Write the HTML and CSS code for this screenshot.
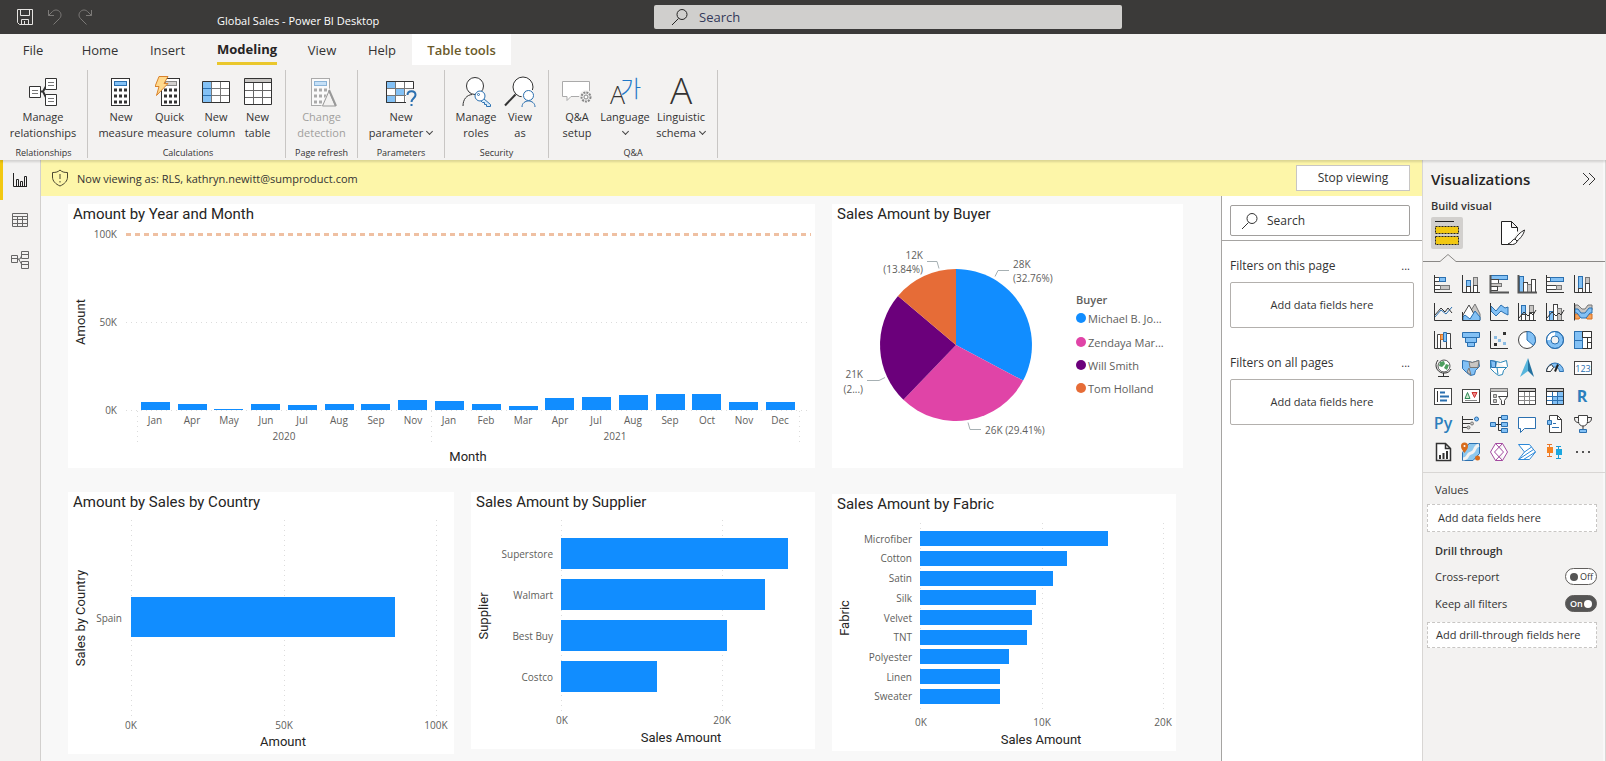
FILE: index.html
```html
<!DOCTYPE html>
<html lang="en">
<head>
<meta charset="utf-8">
<title>Global Sales - Power BI Desktop</title>
<meta name="viewport" content="width=device-width, initial-scale=1">
<link rel="stylesheet" href="styles.css">
</head>
<body>
<header class="titlebar">
  <div class="quick">
    <button aria-label="Save"><svg width="18" height="18" viewBox="0 0 18 18"><path d="M1.500 1.500h15v15h-13l-2-2zM4.500 1.500v6h9v-6M5.500 16.500v-5h7v5M8.500 13v3.500" stroke="#e6e4e2" fill="none"/></svg></button>
    <button aria-label="Undo"><svg width="18" height="18" viewBox="0 0 18 18"><path d="M2.500 2v5.500h5.500M2.500 7.500l4-4c2-2 5-2 7 0s2 5 0 7l-6 6" stroke="#7b7977" fill="none"/></svg></button>
    <button aria-label="Redo"><svg width="18" height="18" viewBox="0 0 18 18"><path d="M15.500 2v5.500h-5.500M15.500 7.500l-4-4c-2-2-5-2-7 0s-2 5 0 7l6 6" stroke="#7b7977" fill="none"/></svg></button>
  </div>
  <h1>Global Sales - Power BI Desktop</h1>
  <label class="topsearch">
    <svg width="18" height="18" viewBox="0 0 18 18"><circle cx="11" cy="6.500" r="5" fill="none" stroke="#252423"/><path d="M7.500 10.500L1 17" stroke="#252423"/></svg>
    <input type="text" placeholder="Search" aria-label="Search">
  </label>
</header>

<nav class="tabs">
  <button class="t-file">File</button><button class="t-home">Home</button><button class="t-insert">Insert</button><button class="t-modeling on"><span>Modeling</span></button><button class="t-view">View</button><button class="t-help">Help</button><button class="t-table">Table tools</button>
</nav>

<section class="ribbon" aria-label="Modeling">
  <div class="group g-rel">
    <div class="items">
      <button class="w86"><svg width="30" height="30" viewBox="0 0 30 30"><path d="M12 15.500h3l4-7M15 15.500l4 8" stroke="#333" stroke-width="2" fill="none"/><g fill="#fff" stroke="#333"><path d="M1.500 10.500h11v11h-11zM17.500 2.500h11v11h-11zM17.500 18.500h11v11h-11z"/></g><path d="M4 14.500h6M4 17.500h6M20 6.500h6M20 9.500h6M20 22.500h6M20 25.500h6" stroke="#777"/></svg><span>Manage<br>relationships</span></button>
    </div>
    <div class="caption">Relationships</div>
  </div>
  <div class="group g-calc">
    <div class="items">
      <button class="w48"><svg width="30" height="30" viewBox="0 0 30 30"><rect x="5.500" y="2.500" width="18" height="27" fill="#fff" stroke="#333"/><rect x="8.500" y="5.500" width="12" height="4" fill="#83c1f5" stroke="#2b70b0"/><path d="M8 14h14M8 20h14M8 26h14" stroke="#333" stroke-width="3" stroke-dasharray="3 2"/></svg><span>New<br>measure</span></button>
      <button class="w49"><svg width="30" height="30" viewBox="0 0 30 30"><rect x="6.500" y="2.500" width="18" height="27" fill="#fff" stroke="#333"/><rect x="10.500" y="5.500" width="11" height="4" fill="#d2d0ce" stroke="#888"/><path d="M9 14h14M9 20h14M9 26h14" stroke="#333" stroke-width="3" stroke-dasharray="3 2"/><path d="M4 .5h9l-4 7h4L1.500 19.500l2.500-9H0z" fill="#ffd98c" stroke="#d9822b"/></svg><span>Quick<br>measure</span></button>
      <button class="w44"><svg width="30" height="30" viewBox="0 0 30 30"><path d="M1.500 5.500h27v21h-27z" fill="#fff"/><path d="M1.500 5.500h9v21h-9z" fill="#83c1f5"/><path d="M10.500 5.500v21M19.500 5.500v21M10.500 12.500h18M10.500 19.500h18" stroke="#777" fill="none"/><path d="M1.500 12.500h9M1.500 19.500h9" stroke="#2b70b0"/><path d="M1.500 5.500h27v21h-27z" stroke="#333" fill="none"/></svg><span>New<br>column</span></button>
      <button class="w39"><svg width="30" height="30" viewBox="0 0 30 30"><path d="M1.500 2.500h27v26h-27z" fill="#fff"/><path d="M1.500 2.500h27v4h-27z" fill="#c8c6c4"/><path d="M10.500 6.500v22M19.500 6.500v22M1.500 14.500h27M1.500 21.500h27" stroke="#666"/><path d="M1.500 2.500h27v26h-27zM1.500 6.500h27" stroke="#333" fill="none"/></svg><span>New<br>table</span></button>
    </div>
    <div class="caption">Calculations</div>
  </div>
  <div class="group g-page">
    <div class="items">
      <button class="w71" disabled><svg width="30" height="32" viewBox="0 0 30 32"><rect x="4.500" y="3.500" width="18" height="27" fill="#fafafa" stroke="#aaa"/><rect x="7.500" y="6.500" width="12" height="4" fill="#c5e0f7" stroke="#8ab4d8"/><path d="M7 15h14M7 21h14M7 27h14" stroke="#aaa" stroke-width="3" stroke-dasharray="3 2"/><path d="M22.500 13L30 31.500H14z" fill="#f3f2f1"/><path d="M22 16l-6.500 15h13z" fill="#f3f2f1" stroke="#999"/><path d="M22 15l7 16" stroke="#999" stroke-width="2"/></svg><span>Change<br>detection</span></button>
    </div>
    <div class="caption">Page refresh</div>
  </div>
  <div class="group g-param">
    <div class="items">
      <button class="w86"><svg width="32" height="30" viewBox="0 0 32 30"><path d="M1.500 5.500h27v21h-27z" fill="#fff"/><path d="M1.500 5.500h9v7h-9zM1.500 19.500h9v7h-9zM10.500 12.500h9v7h-9z" fill="#83c1f5" stroke="#2b70b0"/><path d="M10.500 5.500v21M19.500 5.500v21M1.500 12.500h27M1.500 19.500h27" stroke="#777"/><path d="M1.500 5.500h27v21h-27z" stroke="#333" fill="none"/><path d="M21 13h11v18H21z" fill="#f3f2f1"/><path d="M22.500 19c0-5 8-5 8 0 0 3-4 3.500-4 7M26.500 28v2" stroke="#2b70b0" stroke-width="2" fill="none"/></svg><span>New<br>parameter <i class="chev"></i></span></button>
    </div>
    <div class="caption">Parameters</div>
  </div>
  <div class="group g-sec">
    <div class="items">
      <button class="w50"><svg width="32" height="32" viewBox="0 0 32 32"><circle cx="15" cy="11" r="8.500" fill="#fff" stroke="#333"/><path d="M3 31c0-7 4-11 9-11.500" fill="none" stroke="#333"/><path d="M23.500 23.500l7 6v2h-4v-2h-2v-2h-2l-2.500-2.500z" fill="#d7ebfb" stroke="#2b70b0"/><circle cx="20" cy="21" r="5" fill="#fff" stroke="#2b70b0"/><circle cx="18.500" cy="19.500" r="1" fill="none" stroke="#2b70b0"/></svg><span>Manage<br>roles</span></button>
      <button class="w38"><svg width="34" height="32" viewBox="0 0 34 32"><circle cx="20" cy="12" r="10" fill="#fff" stroke="#333"/><path d="M12.500 19.500L2 30.500" stroke="#333" stroke-width="2"/><path d="M18 32v-9l4-8h9v17z" fill="#f3f2f1"/><circle cx="25.500" cy="20.500" r="5" fill="#fff" stroke="#2b70b0"/><path d="M19 32c0-8 13-8 13 0" fill="none" stroke="#2b70b0"/></svg><span>View<br>as</span></button>
    </div>
    <div class="caption">Security</div>
  </div>
  <div class="group g-qa">
    <div class="items">
      <button class="w44"><svg width="32" height="30" viewBox="0 0 32 30"><path d="M1.500 5.500h27v15H10l-4 4v-4H1.500z" fill="#fff" stroke="#aaa"/><circle cx="25" cy="21" r="7" fill="#f3f2f1"/><circle cx="25" cy="21" r="4.500" fill="#eee" stroke="#888" stroke-width="2" stroke-dasharray="2 1"/><circle cx="25" cy="21" r="2" fill="#fff" stroke="#888"/></svg><span>Q&amp;A<br>setup</span></button>
      <button class="w52"><svg width="32" height="32" viewBox="0 0 32 32"><text x="1" y="29" font-size="25" fill="#333" class="la">A</text><text x="11" y="22" font-size="23" fill="#1f78c8" class="kr">가</text></svg><span>Language<br><i class="chev"></i></span></button>
      <button class="w60"><svg width="32" height="32" viewBox="0 0 32 32"><text x="16" y="29" font-size="37" text-anchor="middle" fill="#333" class="la">A</text></svg><span>Linguistic<br>schema <i class="chev"></i></span></button>
    </div>
    <div class="caption">Q&amp;A</div>
  </div>
</section>

<div class="work">
  <nav class="rail">
    <button class="sel" aria-label="Report view"><svg width="16" height="16" viewBox="0 0 16 16"><path d="M1.500 1v13.500H15M4.500 14V7.500h2V14M8.500 14v-4.500h2V14M12.500 14V4.500h2V14" fill="none" stroke="#222"/></svg></button>
    <button aria-label="Data view"><svg width="18" height="18" viewBox="0 0 18 18"><path d="M1.500 2.500h15v13h-15zM1.500 5.500h15M1.500 8.500h15M1.500 12.500h15M6.500 5v10.500M11.500 5v10.500" fill="none" stroke="#666"/></svg></button>
    <button aria-label="Model view"><svg width="20" height="20" viewBox="0 0 20 20"><path d="M1.500 5.500h6v7h-6zM11.500 1.500h7v7h-7zM11.500 11.500h7v7h-7zM7.500 9h2.500l1.500-3M8.500 9l3 5M11.500 4.500h7M11.500 14.500h7M1.500 8.500h6" fill="none" stroke="#666"/></svg></button>
  </nav>

  <main class="center">
    <div class="notice">
      <svg width="18" height="18" viewBox="0 0 18 18"><path d="M9 1c2 2 4 2.500 7.500 2.500V8c0 4-3 7-7.500 9-4.500-2-7.500-5-7.500-9V3.500C5 3.500 7 3 9 1zM9 5v5M9 12v1.500" fill="none" stroke="#4a4630"/></svg>
      <p>Now viewing as: RLS, kathryn.newitt@sumproduct.com</p>
      <button>Stop viewing</button>
    </div>
    <div class="split">
      <div class="canvas">
        <div class="col-left">
          <article class="card">
            <h2>Amount by Year and Month</h2>
            <svg class="chart" viewBox="0 0 747 240">
              <path class="grid" d="M58 94.500h684M58 182.500h684M69.500 183v35M363.500 183v35M731.500 183v35"/>
              <path d="M58 6.500h685" stroke="#efc0a2" stroke-width="3" stroke-dasharray="5 4"/>
              <g class="bar"><rect x="73" y="174" width="29" height="8"/><rect x="110" y="176" width="29" height="6"/><rect x="146" y="181" width="29" height="1"/><rect x="183" y="176" width="29" height="6"/><rect x="220" y="177" width="29" height="5"/><rect x="257" y="176" width="29" height="6"/><rect x="293" y="176" width="29" height="6"/><rect x="330" y="172" width="29" height="10"/><rect x="367" y="173" width="29" height="9"/><rect x="404" y="176" width="29" height="6"/><rect x="441" y="178" width="29" height="4"/><rect x="477" y="170" width="29" height="12"/><rect x="514" y="169" width="29" height="13"/><rect x="551" y="167" width="29" height="15"/><rect x="588" y="166" width="29" height="16"/><rect x="624" y="166" width="29" height="16"/><rect x="661" y="174" width="29" height="8"/><rect x="698" y="174" width="29" height="8"/></g>
              <g class="lab end"><text x="49" y="10">100K</text><text x="49" y="98">50K</text><text x="49" y="186">0K</text></g>
              <g class="lab mid"><text x="87" y="196">Jan</text><text x="124" y="196">Apr</text><text x="161" y="196">May</text><text x="198" y="196">Jun</text><text x="234" y="196">Jul</text><text x="271" y="196">Aug</text><text x="308" y="196">Sep</text><text x="345" y="196">Nov</text><text x="381" y="196">Jan</text><text x="418" y="196">Feb</text><text x="455" y="196">Mar</text><text x="492" y="196">Apr</text><text x="528" y="196">Jul</text><text x="565" y="196">Aug</text><text x="602" y="196">Sep</text><text x="639" y="196">Oct</text><text x="676" y="196">Nov</text><text x="712" y="196">Dec</text><text x="216" y="212">2020</text><text x="547" y="212">2021</text></g>
              <text class="axis" x="400" y="233">Month</text>
              <text class="axis" transform="translate(17 94) rotate(-90)">Amount</text>
            </svg>
          </article>
          <div class="pair">
            <article class="card c-country">
              <h2>Amount by Sales by Country</h2>
              <svg class="chart" viewBox="0 0 386 238">
                <path class="grid" d="M63.500 4v196M216.500 4v196M368.500 4v196"/>
                <g class="bar"><rect x="63" y="81" width="264" height="40"/></g>
                <g class="lab end"><text x="54" y="106">Spain</text></g>
                <g class="lab mid"><text x="63" y="213">0K</text><text x="216" y="213">50K</text><text x="368" y="213">100K</text></g>
                <text class="axis" x="215" y="230">Amount</text>
                <text class="axis" transform="translate(17 102) rotate(-90)">Sales by Country</text>
              </svg>
            </article>
            <article class="card c-supplier">
              <h2>Sales Amount by Supplier</h2>
              <svg class="chart" viewBox="0 0 344 233">
                <path class="grid" d="M90.500 4v191M251.500 4v191"/>
                <g class="bar"><rect x="90" y="22" width="227" height="31"/><rect x="90" y="63" width="204" height="31"/><rect x="90" y="104" width="166" height="31"/><rect x="90" y="145" width="96" height="31"/></g>
                <g class="lab end"><text x="82" y="42">Superstore</text><text x="82" y="83">Walmart</text><text x="82" y="124">Best Buy</text><text x="82" y="165">Costco</text></g>
                <g class="lab mid"><text x="91" y="208">0K</text><text x="251" y="208">20K</text></g>
                <text class="axis" x="210" y="226">Sales Amount</text>
                <text class="axis" transform="translate(17 100) rotate(-90)">Supplier</text>
              </svg>
            </article>
          </div>
        </div>
        <div class="col-right">
          <article class="card">
            <h2>Sales Amount by Buyer</h2>
            <svg class="chart" viewBox="0 0 351 240">
              <path fill="#118dff" d="M124 117V41A76 76 0 0 1 191.100 152.600z"/>
              <path fill="#e044a7" d="M124 117L191.100 152.600A76 76 0 0 1 71.400 171.800z"/>
              <path fill="#6b007b" d="M124 117L71.400 171.800A76 76 0 0 1 66 67.900z"/>
              <path fill="#e66c37" d="M124 117L66 67.900A76 76 0 0 1 124 41z"/>
              <path d="M95 33.500h10l2 7M177 42.500h-11l-3 6M35 152.500h12l6-3M149 201.500h-11l-2-7" fill="none" stroke="#a6b0b3"/>
              <g class="lab end"><text x="91" y="31">12K</text><text x="91" y="45">(13.84%)</text><text x="31" y="150">21K</text><text x="31" y="165">(2...)</text></g>
              <g class="lab"><text x="181" y="40">28K</text><text x="181" y="54">(32.76%)</text><text x="153" y="206">26K (29.41%)</text></g>
              <circle cx="249" cy="90" r="5" fill="#118dff"/><circle cx="249" cy="114" r="5" fill="#e044a7"/><circle cx="249" cy="137" r="5" fill="#6b007b"/><circle cx="249" cy="160" r="5" fill="#e66c37"/>
              <g class="legend"><text class="strong" x="244" y="76">Buyer</text><text x="256" y="95">Michael B. Jo...</text><text x="256" y="119">Zendaya Mar...</text><text x="256" y="142">Will Smith</text><text x="256" y="165">Tom Holland</text></g>
            </svg>
          </article>
          <article class="card c-fabric">
            <h2>Sales Amount by Fabric</h2>
            <svg class="chart" viewBox="0 0 344 233">
              <path class="grid" d="M88.500 5v190M210.500 5v190M331.500 5v190"/>
              <g class="bar"><rect x="88" y="13" width="188" height="15"/><rect x="88" y="33" width="147" height="15"/><rect x="88" y="53" width="133" height="15"/><rect x="88" y="72" width="116" height="15"/><rect x="88" y="92" width="112" height="15"/><rect x="88" y="112" width="107" height="15"/><rect x="88" y="131" width="89" height="15"/><rect x="88" y="151" width="80" height="15"/><rect x="88" y="171" width="80" height="15"/></g>
              <g class="lab end"><text x="80" y="25">Microfiber</text><text x="80" y="44">Cotton</text><text x="80" y="64">Satin</text><text x="80" y="84">Silk</text><text x="80" y="104">Velvet</text><text x="80" y="123">TNT</text><text x="80" y="143">Polyester</text><text x="80" y="163">Linen</text><text x="80" y="182">Sweater</text></g>
              <g class="lab mid"><text x="89" y="208">0K</text><text x="210" y="208">10K</text><text x="331" y="208">20K</text></g>
              <text class="axis" x="209" y="226">Sales Amount</text>
              <text class="axis" transform="translate(17 100) rotate(-90)">Fabric</text>
            </svg>
          </article>
        </div>
      </div>

      <aside class="filters">
        <div class="fsearch">
          <label><svg width="18" height="18" viewBox="0 0 18 18"><circle cx="11" cy="6.500" r="5" fill="none" stroke="#333"/><path d="M7.500 10.500L1 17" stroke="#333"/></svg><input type="text" placeholder="Search" aria-label="Search filters"></label>
        </div>
        <section><header><h3>Filters on this page</h3><button aria-label="More options for page filters">...</button></header><div class="drop">Add data fields here</div></section>
        <section><header><h3>Filters on all pages</h3><button aria-label="More options for all page filters">...</button></header><div class="drop">Add data fields here</div></section>
      </aside>
    </div>
  </main>

  <aside class="viz">
    <header><h2>Visualizations</h2><button aria-label="Collapse pane"><svg width="14" height="14" viewBox="0 0 14 14"><path d="M1 1l6 6-6 6M7 1l6 6-6 6" fill="none" stroke="#333"/></svg></button></header>
    <h3>Build visual</h3>
    <div class="modes">
      <button class="sel" aria-label="Build visual"><svg width="32" height="32" viewBox="0 0 32 32"><path d="M4 4.500h19" stroke="#222"/><path d="M4.500 9.500h23v7h-23zM4.500 19.500h23v8h-23z" fill="#f2c811" stroke="#222" stroke-dasharray="2 1"/></svg></button>
      <button aria-label="Format visual"><svg width="32" height="32" viewBox="0 0 32 32"><path d="M14 27.500H5.500v-23h10l6 6v4M15.500 4.500v6h6" fill="#fff" stroke="#222"/><path d="M28.500 13c-4 2-8 6-9.500 9l2 2c3-2 7-7 7.500-11zM19 22c-3 0-3 4-7 5 4 1.500 9 0 9-3z" fill="#fff" stroke="#222"/></svg></button>
    </div>
    <svg class="notch" width="100%" height="8" aria-hidden="true"><path d="M0 7.500h17l8-7 8 7H2000" fill="none" stroke="#8a8886"/></svg>
    <div class="icons">
      <button aria-label="Stacked bar chart"><svg viewBox="0 0 20 20"><rect class="w" x="1.500" y="3.500" width="5" height="4"/><rect class="b" x="6.500" y="3.500" width="6" height="4"/><rect class="w" x="1.500" y="11.500" width="6" height="4"/><rect class="g" x="7.500" y="11.500" width="9" height="4"/><path class="k" d="M1.500 1v17.500H19"/></svg></button>
      <button aria-label="Stacked column chart"><svg viewBox="0 0 20 20"><rect class="b" x="5.500" y="6.500" width="4" height="6"/><rect class="w" x="5.500" y="12.500" width="4" height="6"/><rect class="g" x="12.500" y="3.500" width="4" height="8"/><rect class="w" x="12.500" y="11.500" width="4" height="7"/><path class="k" d="M1.500 1v17.500H19"/></svg></button>
      <button aria-label="Clustered bar chart"><svg viewBox="0 0 20 20"><rect class="b" x="1.500" y="1.500" width="17" height="4"/><rect class="w" x="1.500" y="5.500" width="8" height="4"/><rect class="g" x="1.500" y="9.500" width="11" height="3"/><rect class="w" x="1.500" y="12.500" width="7" height="4"/><path class="k2" d="M1.500 1v17.500H20"/></svg></button>
      <button aria-label="Clustered column chart"><svg viewBox="0 0 20 20"><rect class="b" x="2.500" y="2.500" width="4" height="16"/><rect class="w" x="6.500" y="8.500" width="4" height="10"/><rect class="g" x="10.500" y="10.500" width="4" height="8"/><rect class="w" x="14.500" y="5.500" width="4" height="13"/><path class="k2" d="M1.500 1v17.500H20"/></svg></button>
      <button aria-label="100% stacked bar chart"><svg viewBox="0 0 20 20"><rect class="w" x="1.500" y="3.500" width="4" height="4"/><rect class="b" x="5.500" y="3.500" width="13" height="4"/><rect class="w" x="1.500" y="11.500" width="10" height="4"/><rect class="g" x="11.500" y="11.500" width="5" height="4"/><path class="k" d="M1.500 1v17.500H19"/></svg></button>
      <button aria-label="100% stacked column chart"><svg viewBox="0 0 20 20"><rect class="b" x="5.500" y="2.500" width="4" height="12"/><rect class="w" x="5.500" y="14.500" width="4" height="4"/><rect class="g" x="12.500" y="3.500" width="4" height="6"/><rect class="w" x="12.500" y="9.500" width="4" height="9"/><path class="k" d="M1.500 1v17.500H19"/></svg></button>

      <button aria-label="Line chart"><svg viewBox="0 0 20 20"><path class="bl" d="M2 15l6-7 5 4 6-7"/><path class="k" d="M2 13l6-7 4 4 3-4 4 5M1.500 1v17.500H19"/></svg></button>
      <button aria-label="Area chart"><svg viewBox="0 0 20 20"><path class="g" d="M9 10l5-8 5 10v6z"/><path class="w" d="M2 13l6-10 5 9-4 6H2z"/><path class="b" d="M2 18.500V15l2-2 5 4 5-8 5 6v3.500z"/><path class="k" d="M1.500 10v8.500H19"/></svg></button>
      <button aria-label="Stacked area chart"><svg viewBox="0 0 20 20"><path class="b" d="M2 4l5 5 5-6 4 3 3-1v8l-4-2-3-2-5 5-5-5z"/><path class="k" d="M1.500 1v17.500H19"/></svg></button>
      <button aria-label="Line and stacked column chart"><svg viewBox="0 0 20 20"><rect class="b" x="4.500" y="3.500" width="4" height="9"/><rect class="w" x="4.500" y="12.500" width="4" height="6"/><rect class="g" x="12.500" y="3.500" width="4" height="7"/><rect class="w" x="12.500" y="10.500" width="4" height="8"/><path class="k" d="M2 16l5-6 4 4 3-3 2 2 3-5M1.500 1v17.500H19"/></svg></button>
      <button aria-label="Line and clustered column chart"><svg viewBox="0 0 20 20"><rect class="b" x="4.500" y="9.500" width="4" height="9"/><rect class="w" x="8.500" y="2.500" width="4" height="16"/><rect class="g" x="12.500" y="6.500" width="4" height="12"/><path class="k" d="M2 16l5-6 4 4 3-3 2 2 3-5M1.500 1v17.500H19"/></svg></button>
      <button aria-label="Ribbon chart"><svg viewBox="0 0 20 20"><path d="M2 17h4l2-3h4l2 3h5v-5H2z" fill="#f5a25d" stroke="#d9701e"/><path class="g" d="M2 3h3l4 4h3l3-4h4v5h-3l-3 4H8L5 9H2z"/><path class="b" d="M2 7h3l3 4h4l4-5h3v5h-2l-4 5H8l-4-5H2z"/><path class="k" d="M1.500 1v17.500"/></svg></button>

      <button aria-label="Waterfall chart"><svg viewBox="0 0 20 20"><path class="w" d="M4.500 4.500h3v14h-3zM13.500 3.500h4v15h-4z"/><path d="M7.500 4.500h3v5h-3z" fill="#f5a25d" stroke="#d9701e"/><path class="b" d="M10.500 2.500h3v9h-3z"/><path class="k" d="M1.500 1v17.500H19"/></svg></button>
      <button aria-label="Funnel"><svg viewBox="0 0 20 20"><path class="b" d="M1.500 2.500h17v5h-17zM4.500 7.500h11v5h-11zM6.500 12.500h7v4h-7z"/></svg></button>
      <button aria-label="Scatter chart"><svg viewBox="0 0 20 20"><path d="M14 2h3v3h-3zM5 13h3v3H5z" fill="#333"/><path d="M5 6h3v3H5zM9 9h3v3H9zM14 12h3v3h-3z" fill="#8bbbe2"/><path class="k" d="M1.500 1v17.500H19"/></svg></button>
      <button aria-label="Pie chart"><svg viewBox="0 0 20 20"><circle class="w" cx="10" cy="10" r="8.500"/><path class="b" d="M10 10V1.500a8.500 8.500 0 0 1 6.500 14z"/></svg></button>
      <button aria-label="Donut chart"><svg viewBox="0 0 20 20"><circle class="b" cx="10" cy="10" r="8.500"/><path d="M10 2A8 8 0 0 0 2 10h5l3-3z" fill="#fff"/><circle class="bl" cx="10" cy="10" r="8.500"/><circle cx="10" cy="10" r="4" fill="#f3f2f1" stroke="#2b70b0"/></svg></button>
      <button aria-label="Treemap"><svg viewBox="0 0 20 20"><path class="w" d="M1.500 1.500h17v17h-17z"/><path class="b" d="M1.500 1.500h8v9h-8zM1.500 10.500h8v8h-8z"/><path class="k" d="M9.500 1.500h9v6h-9zM9.500 7.500h5v11M14.500 12.500h4v6h-9"/></svg></button>

      <button aria-label="Map"><svg viewBox="0 0 20 20"><circle cx="11" cy="8" r="6" fill="#fff" stroke="#555"/><path d="M7 4l4-1 1 3-3 3-3-1zM13 6l3 1-2 5-3-2z" fill="#4d9e5f"/><path class="k" d="M5 2c-5 6 0 14 7 13 3 0 5-2 6-4M10.500 15v3M5 18.500h11"/></svg></button>
      <button aria-label="Filled map"><svg viewBox="0 0 20 20"><path class="b" d="M1.500 2.500l6 1 4 1 6-2 1 6-4 4-1 4-4 1-4-3-4-4z"/><path class="g" d="M8 3.500l3 1 7-2-1 7H9zM8 10l2 7-4-3z"/></svg></button>
      <button aria-label="Shape map"><svg viewBox="0 0 20 20"><path d="M1.500 2.500l6 1 4 1 6-2 1 6-4 4-1 4-4 1-4-3-4-4zM7.500 3.500l-1 6h11M8 9.500l1 7" fill="#fff" stroke="#2b88b8"/><path class="b" d="M1.500 2.500l5 1v6h-4z"/></svg></button>
      <button aria-label="Azure map"><svg viewBox="0 0 20 20"><path d="M11 0L3 19l8-6z" fill="#57b5dc"/><path d="M11 0l6 19-6-6z" fill="#23719f"/></svg></button>
      <button aria-label="Gauge"><svg viewBox="0 0 20 20"><path class="b" d="M1.500 13.500a8.500 8.500 0 0 1 17 0h-4a4.500 4.500 0 0 0-9 0z"/><path d="M1.500 13.500a8.500 8.500 0 0 1 5-7l2 3-3 4z" fill="#fff" stroke="#333"/><path d="M10 13.500l3-7" stroke="#222" stroke-width="2"/></svg></button>
      <button aria-label="Card"><svg viewBox="0 0 20 20"><rect class="w" x="1.500" y="3.500" width="17" height="13"/><text x="10" y="14" font-size="9" text-anchor="middle" fill="#2b70b0">123</text></svg></button>

      <button aria-label="Multi-row card"><svg viewBox="0 0 20 20"><rect class="w" x="1.500" y="2.500" width="17" height="16"/><path class="k" d="M4.500 5v11"/><path d="M7 6.500h5M7 10.500h9M7 14.500h7" stroke="#2b70b0" stroke-width="2"/></svg></button>
      <button aria-label="KPI"><svg viewBox="0 0 20 20"><rect class="w" x="1.500" y="3.500" width="17" height="13"/><path d="M4 12.500l2.500-6 2.500 6z" fill="#cfe8cf" stroke="#2e8b57"/><path d="M11 6.500h5l-2.500 5z" fill="#e88" stroke="#c33"/><path d="M4 14.500h12" stroke="#888"/></svg></button>
      <button aria-label="Slicer"><svg viewBox="0 0 20 20"><path class="w" d="M1.500 2.500h17v16h-17z"/><path class="g" d="M1.500 2.500h17v3h-17zM4.500 8.500h3v3h-3zM4.500 13.500h3v3h-3z"/><path d="M10 11h9v8h-9z" fill="#f3f2f1"/><path class="w" d="M9.500 10.500h9l-3 4v4h-3v-4z"/></svg></button>
      <button aria-label="Table"><svg viewBox="0 0 20 20"><path class="w" d="M1.500 2.500h17v16h-17z"/><path d="M7.500 6v12M12.500 6v12M2 10.500h16M2 14.500h16" stroke="#888"/><path d="M1.500 2.500h17v3h-17z" fill="#c8c6c4" stroke="#333"/></svg></button>
      <button aria-label="Matrix"><svg viewBox="0 0 20 20"><path class="w" d="M1.500 2.500h17v16h-17z"/><path d="M7 10h6v4H7zM13 6h5v12h-5zM7 14h6v4H7z" fill="#83c1f5"/><path d="M7.500 6v12M12.500 6v12M2 10.500h16M2 14.500h16" stroke="#2b70b0"/><path d="M1.500 2.500h17v3h-17z" fill="#c8c6c4" stroke="#333"/><path class="k" d="M1.500 2.500h17v16h-17z"/></svg></button>
      <button aria-label="R script visual"><svg viewBox="0 0 20 20"><text x="9" y="16" font-size="16" font-weight="700" text-anchor="middle" fill="#2b7fbd">R</text></svg></button>

      <button aria-label="Python visual"><svg viewBox="0 0 20 20"><text x="10" y="15" font-size="16" font-weight="600" text-anchor="middle" fill="#2b7fbd">Py</text></svg></button>
      <button aria-label="Key influencers"><svg viewBox="0 0 20 20"><path class="k" d="M1.500 2v16.500H19M2 5.500h10M2 9.500h7M2 13.500h4" /><circle class="b" cx="15.500" cy="5" r="2"/><circle class="g" cx="11" cy="9.500" r="1.500"/><circle class="g" cx="7.500" cy="13.500" r="1.500"/></svg></button>
      <button aria-label="Decomposition tree"><svg viewBox="0 0 20 20"><path class="k" d="M6 10.500h7M9.500 3.500v13M9.500 3.500h3M9.500 16.500h3"/><path class="b" d="M1.500 8.500h5v4h-5zM12.500 1.500h6v4h-6zM12.500 8.500h6v4h-6zM12.500 14.500h6v4h-6z"/></svg></button>
      <button aria-label="Q&amp;A"><svg viewBox="0 0 20 20"><path d="M1.500 3.500h17v11h-11l-4 4v-4h-2z" fill="#fff" stroke="#2b70b0"/></svg></button>
      <button aria-label="Smart narrative"><svg viewBox="0 0 20 20"><path class="w" d="M4.500 1.500h8l4 4v13h-12z"/><path class="k" d="M12.500 1.500v4h4"/><path class="b" d="M2.500 6.500h4v4h-4z"/><path d="M8 9.500h3M7 13.500h7" stroke="#2b70b0"/></svg></button>
      <button aria-label="Metrics"><svg viewBox="0 0 20 20"><path class="w" d="M5.500 1.500h9v6c0 6-9 6-9 0z"/><path class="k" d="M5 3.500H1.500c0 4 1.500 5 4.500 5M15 3.500h3.500c0 4-1.500 5-4.500 5M10 12v4"/><path class="b" d="M6.500 15.500h7v3h-7z"/></svg></button>

      <button aria-label="Paginated report"><svg viewBox="0 0 20 20"><path d="M3.500 1.500h9l5 5v12h-14zM12.500 1.500v5h5" fill="#fff" stroke="#333" stroke-width="1.500"/><path d="M7 17v-4M10.500 17v-6M14 17V9" stroke="#333" stroke-width="2"/></svg></button>
      <button aria-label="ArcGIS map"><svg viewBox="0 0 20 20"><path d="M8 1.500h10.500v10L12 18.500H1.500v-8z" fill="#8ec8ee" stroke="#2b70b0"/><path d="M2 17c6 0 3-5 8-6s2-6 8-8" fill="none" stroke="#f3f2f1" stroke-width="3"/><path d="M0 4a3 3 0 0 1 7 0c0 3-1.500 4-3.500 7C1.500 8 0 7 0 4z" fill="#d86b1b"/><circle cx="3.500" cy="4" r="1" fill="#fff"/><circle cx="16.500" cy="16" r="2.500" fill="#d86b1b"/></svg></button>
      <button aria-label="Power Apps"><svg viewBox="0 0 20 20"><path d="M6.500 1.500h7l5 8.500-5 8.500h-7L1.500 10zM6.500 1.500l8 8.500-8 8.500M13.500 1.500l-8 8.500 8 8.500" fill="#fff" stroke="#a34aa0" stroke-linejoin="round"/></svg></button>
      <button aria-label="Power Automate"><svg viewBox="0 0 20 20"><path d="M1.500 2.500h11l6 7.500-6 7.500h-11l6-7.500zM7.500 10l7-5M1.500 17.500l15-10M6.500 17.500l12-7.500" fill="#fff" stroke="#2b88d8" stroke-linejoin="round"/></svg></button>
      <button aria-label="Box plot"><svg viewBox="0 0 20 20"><path d="M4.500 2v12M2 2.500h5M2 14.500h5" stroke="#e8762d"/><path d="M2 5h6v6H2z" fill="#f58220"/><path d="M13.500 4v12M11 4.500h5M11 16.500h5" stroke="#1a9ad6"/><path d="M11 7h6v6h-6z" fill="#1aa7e0"/></svg></button>
      <button aria-label="Get more visuals"><svg viewBox="0 0 20 20"><path d="M3 9h2v2H3zM9 9h2v2H9zM15 9h2v2h-2z" fill="#555"/></svg></button>
    </div>
    <div class="fields">
      <h4>Values</h4>
      <div class="well">Add data fields here</div>
      <h4 class="strong">Drill through</h4>
      <div class="row"><label for="cross">Cross-report</label><span class="switch"><input id="cross" type="checkbox"><span>Off</span></span></div>
      <div class="row"><label for="keep">Keep all filters</label><span class="switch"><input id="keep" type="checkbox" checked><span>On</span></span></div>
      <div class="well drill">Add drill-through fields here</div>
    </div>
  </aside>
</div>
</body>
</html>
```

FILE: styles.css
```css
* { box-sizing: border-box; }
body {
  margin: 0;
  height: 100vh;
  display: flex;
  flex-direction: column;
  overflow: hidden;
  background: #f3f2f1;
  color: #333;
  font: 11px/16px "Open Sans", "Noto Sans", sans-serif;
}
h1, h2, h3, h4, p { margin: 0; font-weight: 400; font-size: inherit; }
button, input { font: inherit; color: inherit; }
button { border: 0; padding: 0; background: none; }
svg { display: block; flex: none; }

.titlebar {
  display: grid;
  grid-template-columns: 217px 437px minmax(200px, 468px) 1fr;
  align-items: center;
  height: 34px;
  flex: none;
  background: #3b3a39;
  color: #fff;
}
.quick { display: flex; gap: 12px; padding-left: 16px; }
.titlebar h1 { padding-top: 7px; }
.topsearch {
  display: flex;
  align-items: center;
  gap: 10px;
  height: 24px;
  padding-left: 17px;
  background: #d0cfcd;
  border-radius: 2px;
}
input[type="text"] { flex: 1; min-width: 0; border: 0; padding: 0; background: none; outline: 0; }
.topsearch input { font-size: 13px; }
.topsearch input::placeholder { color: #33395a; opacity: 1; }

.tabs { display: flex; height: 31px; flex: none; font-size: 13px; }
.tabs .t-file { width: 66px; }
.tabs .t-home { width: 68px; }
.tabs .t-insert { width: 67px; }
.tabs .t-modeling { width: 91px; }
.tabs .t-view, .tabs .t-help { width: 60px; }
.tabs .t-table { width: 99px; background: #fff; color: #6b5a2a; font-weight: 600; }
.tabs .on { font-weight: 700; color: #252423; }
.tabs .on span { display: block; margin: 0 15px 0 16px; padding-top: 3px; line-height: 25px; border-bottom: 3px solid #eac72c; white-space: nowrap; }

.ribbon {
  display: flex;
  height: 95px;
  flex: none;
  padding: 5px 0 2px;
  position: relative;
  box-shadow: 0 2px 2px #0002;
}
.group { display: flex; flex-direction: column; justify-content: space-between; border-right: 1px solid #c8c6c4; flex: none; }
.g-rel { width: 88px; }
.g-calc { width: 198px; padding-left: 9px; }
.g-page { width: 72px; }
.g-param { width: 87px; }
.g-sec { width: 104px; padding-left: 6px; }
.g-qa { width: 169px; padding-left: 6px; }
.items { display: flex; padding-top: 5px; }
.items button { display: flex; flex-direction: column; align-items: center; gap: 2px; text-align: center; flex: none; white-space: nowrap; }
.items button svg { height: 32px; }
.items button:disabled { color: #a19f9d; }
.w38 { width: 38px; } .w39 { width: 39px; } .w44 { width: 44px; } .w48 { width: 48px; }
.w49 { width: 49px; } .w50 { width: 50px; } .w52 { width: 52px; } .w60 { width: 60px; }
.w71 { width: 71px; } .w86 { width: 86px; }
.caption { font-size: 9px; line-height: 10px; text-align: center; }
.g-calc .caption, .g-sec .caption, .g-qa .caption { margin-left: -6px; }
.chev { display: inline-block; width: 5px; height: 5px; margin: 0 1px 3px; border: solid #444; border-width: 0 1px 1px 0; transform: rotate(45deg); }
.la { font-family: "Open Sans", sans-serif; font-weight: 300; }
.kr { font-family: "Noto Sans CJK KR", sans-serif; font-weight: 300; }

.work { display: flex; flex: 1; min-height: 0; }
.rail { width: 41px; flex: none; border-right: 1px solid #d2d0ce; }
.rail button { display: flex; width: 100%; height: 40px; align-items: center; justify-content: center; border-left: 3px solid transparent; padding-right: 3px; }
.rail .sel { border-color: #f2c811; }

.center { flex: 1; min-width: 0; display: flex; flex-direction: column; }
.notice { display: flex; align-items: center; gap: 8px; height: 36px; flex: none; padding: 0 12px 0 10px; background: #fdf6a9; }
.notice p { flex: 1; padding-top: 2px; }
.notice button { width: 114px; height: 26px; background: #fff; border: 1px solid #c8c6c4; font-size: 12px; }
.split { display: flex; flex: 1; min-height: 0; }
.canvas { flex: 1; min-width: 0; display: flex; align-items: flex-start; gap: 17px; padding: 8px 38px 0 27px; background: #f8f8f8; }
.col-left { flex: 747 1 0; min-width: 0; display: flex; flex-direction: column; gap: 24px; }
.col-right { flex: 351 1 0; min-width: 0; display: flex; flex-direction: column; gap: 26px; }
.pair { display: flex; align-items: flex-start; gap: 17px; }
.c-country { flex: 386 1 0; min-width: 0; }
.c-supplier { flex: 344 1 0; min-width: 0; }
.c-fabric { margin-right: 7px; }
.card { background: #fff; }
.card h2 { padding: 0 0 4px 5px; font: 15px/20px Roboto, sans-serif; color: #252423; white-space: nowrap; }
.chart { width: 100%; height: auto; }
.grid { stroke: #dcdcdc; stroke-dasharray: 1 4; fill: none; }
.bar { fill: #118dff; }
.lab { font-size: 10px; fill: #605e5c; }
.end { text-anchor: end; }
.mid { text-anchor: middle; }
.axis { font: 13px Roboto, sans-serif; fill: #252423; text-anchor: middle; }
.legend { font-size: 11px; fill: #605e5c; }
.strong { font-weight: 600; }

.filters { width: 201px; flex: none; background: #fff; border-left: 1px solid #a6a4a2; }
.fsearch { padding: 9px 12px 4px 8px; border-bottom: 1px solid #a6a4a2; }
.fsearch label { display: flex; align-items: center; gap: 8px; height: 31px; padding-left: 10px; border: 1px solid #a19f9d; border-radius: 2px; font-size: 12px; }
.filters input::placeholder { color: #333; opacity: 1; }
.filters section { padding: 17px 8px 0; }
.filters section + section { padding-top: 27px; }
.filters header { display: flex; justify-content: space-between; padding: 0 4px 8px 0; }
.filters h3 { font-size: 12px; }
.drop { display: flex; align-items: center; justify-content: center; height: 46px; border: 1px solid #b3b0ad; border-radius: 2px; }

.viz { width: 184px; flex: none; border: solid #d8d6d4; border-width: 0 1px 0 1px; box-shadow: inset -2px 0 #f8f8f8; }
.viz header { display: flex; align-items: center; justify-content: space-between; padding: 9px 9px 0 8px; }
.viz h2 { font-size: 15px; line-height: 20px; font-weight: 600; color: #252423; }
.viz h3 { padding: 9px 8px 0; font-weight: 600; }
.modes { display: flex; gap: 33px; padding: 3px 8px 5px; }
.modes .sel { background: #d2d0ce; border-radius: 2px; }
.notch { width: 100%; }
.icons { display: grid; grid-template-columns: repeat(6, 28px); grid-auto-rows: 28px; padding: 8px 0 6px 6px; border-bottom: 1px solid #d8d6d4; }
.icons button { display: flex; align-items: center; justify-content: center; }
.icons svg { width: 20px; height: 20px; }
.icons .w { fill: #fff; stroke: #444; }
.icons .b { fill: #83c1f5; stroke: #2b70b0; }
.icons .g { fill: #c8c6c4; stroke: #777; }
.icons .k { fill: none; stroke: #333; }
.icons .k2 { fill: none; stroke: #555; stroke-width: 2; }
.icons .bl { fill: none; stroke: #2b70b0; }

.fields { padding: 9px 4px 0; }
.fields h4 { padding: 0 8px; }
.fields h4.strong { font-weight: 600; padding-top: 11px; }
.well { display: flex; align-items: center; height: 28px; margin: 6px 0 0; padding-left: 10px; background: #fff; border: 1px dashed #c8c6c4; white-space: nowrap; width: 170px; }
.well.drill { padding-left: 8px; height: 26px; margin-top: 9px; }
.row { display: flex; align-items: center; justify-content: space-between; padding: 8px 0 0 8px; width: 170px; height: 27px; }
.switch { display: grid; width: 32px; height: 17px; font-size: 9px; line-height: 17px; }
.switch input { grid-area: 1 / 1; appearance: none; margin: 0; display: flex; align-items: center; border: 1px solid #605e5c; border-radius: 9px; background: #fff; padding: 0 4px; }
.switch input::before { content: ""; width: 8px; height: 8px; border-radius: 50%; background: #555; }
.switch input:checked { background: #555; justify-content: flex-end; }
.switch input:checked::before { background: #fff; }
.switch span { grid-area: 1 / 1; z-index: 1; pointer-events: none; padding-left: 15px; }
.switch input:checked + span { padding-left: 5px; color: #fff; font-weight: 600; }
```
